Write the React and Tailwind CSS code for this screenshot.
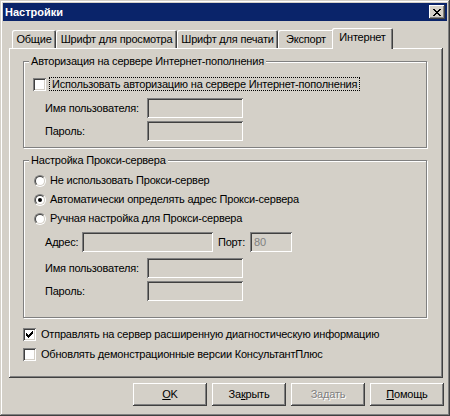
import React from "react";

// classic win2k bevels
const raised = "shadow-[inset_-1px_-1px_#404040,inset_1px_1px_#ffffff,inset_-2px_-2px_#808080]";
const sunken = "shadow-[inset_1px_1px_#808080,inset_-1px_-1px_#ffffff,inset_2px_2px_#404040,inset_-2px_-2px_#d4d0c8]";
const etched = "border border-[#808080] shadow-[1px_1px_0_#ffffff,inset_1px_1px_0_#ffffff]";

const tabs = [
  { label: "Общие", w: "w-[44px]" },
  { label: "Шрифт для просмотра", w: "w-[121px]" },
  { label: "Шрифт для печати", w: "w-[101px]" },
  { label: "Экспорт", w: "w-[56px]" },
];

function CheckBox({ checked }) {
  return (
    <span className={`w-[13px] h-[13px] shrink-0 bg-white flex items-center justify-center ${sunken}`}>
      {checked && (
        <svg width="7" height="7" viewBox="0 0 7 7" shapeRendering="crispEdges">
          <rect x="6" y="0" width="1" height="1" />
          <rect x="5" y="1" width="2" height="1" />
          <rect x="0" y="2" width="1" height="1" />
          <rect x="4" y="2" width="3" height="1" />
          <rect x="0" y="3" width="2" height="1" />
          <rect x="3" y="3" width="3" height="1" />
          <rect x="0" y="4" width="5" height="1" />
          <rect x="1" y="5" width="3" height="1" />
          <rect x="2" y="6" width="1" height="1" />
        </svg>
      )}
    </span>
  );
}

function Radio({ checked }) {
  return (
    <span className="w-[12px] h-[12px] shrink-0 rounded-full border border-[#808080] border-r-white border-b-white flex">
      <span className="flex-1 rounded-full border border-[#404040] border-r-[#d4d0c8] border-b-[#d4d0c8] bg-white flex items-center justify-center">
        {checked && <span className="w-[4px] h-[4px] rounded-full bg-black" />}
      </span>
    </span>
  );
}

function Field({ w, value }) {
  return (
    <div className={`h-[20px] ${w} bg-[#d4d0c8] ${sunken} flex items-center pl-[4px] text-[#808080]`}>
      {value}
    </div>
  );
}

function LabeledField({ label, className = "" }) {
  return (
    <div className={`flex items-center h-[20px] ml-[16px] ${className}`}>
      <span className="w-[102px]">{label}</span>
      <Field w="w-[96px]" />
    </div>
  );
}

function Button({ children, disabled }) {
  return (
    <button
      type="button"
      className={`w-[74px] h-[23px] flex items-center justify-center bg-[#d4d0c8] ${raised} ${
        disabled ? "text-[#808080] [text-shadow:1px_1px_0_#ffffff]" : "text-black"
      }`}
    >
      {children}
    </button>
  );
}

export default function App() {
  return (
    <div className="w-[450px] h-[416px] bg-[#d4d0c8] p-[3px] flex flex-col shadow-[inset_-1px_-1px_#404040,inset_1px_1px_#d4d0c8,inset_-2px_-2px_#808080,inset_2px_2px_#ffffff] [font-family:'Liberation_Sans',Arial,sans-serif] text-[11px] leading-[13px] tracking-[-0.2px] text-black">
      {/* title bar */}
      <div className="h-[18px] bg-[#0a246a] flex items-center justify-between px-[2px]">
        <span className="text-white font-bold tracking-normal">Настройки</span>
        <span className={`w-[16px] h-[14px] bg-[#d4d0c8] flex items-center justify-center ${raised}`}>
          <svg width="8" height="7" viewBox="0 0 8 7" shapeRendering="crispEdges">
            <rect x="0" y="0" width="2" height="1" />
            <rect x="6" y="0" width="2" height="1" />
            <rect x="1" y="1" width="2" height="1" />
            <rect x="5" y="1" width="2" height="1" />
            <rect x="2" y="2" width="4" height="1" />
            <rect x="3" y="3" width="2" height="1" />
            <rect x="2" y="4" width="4" height="1" />
            <rect x="1" y="5" width="2" height="1" />
            <rect x="5" y="5" width="2" height="1" />
            <rect x="0" y="6" width="2" height="1" />
            <rect x="6" y="6" width="2" height="1" />
          </svg>
        </span>
      </div>

      {/* tabs */}
      <div className="mt-[7px] ml-[9px] flex items-end">
        {tabs.map((t) => (
          <div
            key={t.label}
            className={`${t.w} h-[18px] flex items-center justify-center rounded-t-[2px] shadow-[inset_1px_1px_#ffffff,inset_-1px_0_#404040,inset_-2px_0_#808080]`}
          >
            {t.label}
          </div>
        ))}
        <div className="w-[61px] h-[21px] -ml-[2px] -mb-px relative z-10 bg-[#d4d0c8] flex items-center justify-center pb-[2px] rounded-t-[2px] shadow-[inset_1px_1px_#ffffff,inset_-1px_0_#404040,inset_-2px_0_#808080]">
          Интернет
        </div>
      </div>

      {/* tab panel */}
      <div className={`ml-[6px] w-[434px] h-[330px] flex flex-col pl-[14px] ${raised}`}>
        <fieldset className={`mt-[7px] w-[404px] px-[5px] pb-[6px] ${etched}`}>
          <legend className="px-[2px] bg-[#d4d0c8]">Авторизация на сервере Интернет-пополнения</legend>
          <div className="mt-[8px] h-[16px] flex items-center ml-[4px]">
            <CheckBox />
            <span className="ml-[3px] px-[2px] border border-dotted border-black leading-[12px]">
              Использовать авторизацию на сервере Интернет-пополнения
            </span>
          </div>
          <LabeledField label="Имя пользователя:" className="mt-[6px]" />
          <LabeledField label="Пароль:" className="mt-[3px]" />
        </fieldset>

        <fieldset className={`mt-[6px] w-[404px] px-[5px] pb-[16px] ${etched}`}>
          <legend className="px-[2px] bg-[#d4d0c8]">Настройка Прокси-сервера</legend>
          <div className="mt-[4px] h-[19px] flex items-center ml-[5px]">
            <Radio />
            <span className="ml-[4px]">Не использовать Прокси-сервер</span>
          </div>
          <div className="h-[19px] flex items-center ml-[5px]">
            <Radio checked />
            <span className="ml-[4px]">Автоматически определять адрес Прокси-сервера</span>
          </div>
          <div className="h-[19px] flex items-center ml-[5px]">
            <Radio />
            <span className="ml-[4px]">Ручная настройка для Прокси-сервера</span>
          </div>
          <div className="mt-[4px] h-[20px] flex items-center ml-[16px]">
            <span className="w-[37px]">Адрес:</span>
            <Field w="w-[131px]" />
            <span className="ml-[5px] w-[32px]">Порт:</span>
            <Field w="w-[42px]" value="80" />
          </div>
          <LabeledField label="Имя пользователя:" className="mt-[6px]" />
          <LabeledField label="Пароль:" className="mt-[3px]" />
        </fieldset>

        <div className="mt-[8px] h-[16px] flex items-center">
          <CheckBox checked />
          <span className="ml-[5px]">Отправлять на сервер расширенную диагностическую информацию</span>
        </div>
        <div className="mt-[4px] h-[16px] flex items-center">
          <CheckBox />
          <span className="ml-[5px]">Обновлять демонстрационные версии КонсультантПлюс</span>
        </div>
      </div>

      {/* buttons */}
      <div className="mt-[5px] mr-[3px] flex justify-end gap-[5px]">
        <Button>
          <u>O</u>K
        </Button>
        <Button>
          За<u>к</u>рыть
        </Button>
        <Button disabled>
          За<u>д</u>ать
        </Button>
        <Button>
          <u>П</u>омощь
        </Button>
      </div>
    </div>
  );
}
